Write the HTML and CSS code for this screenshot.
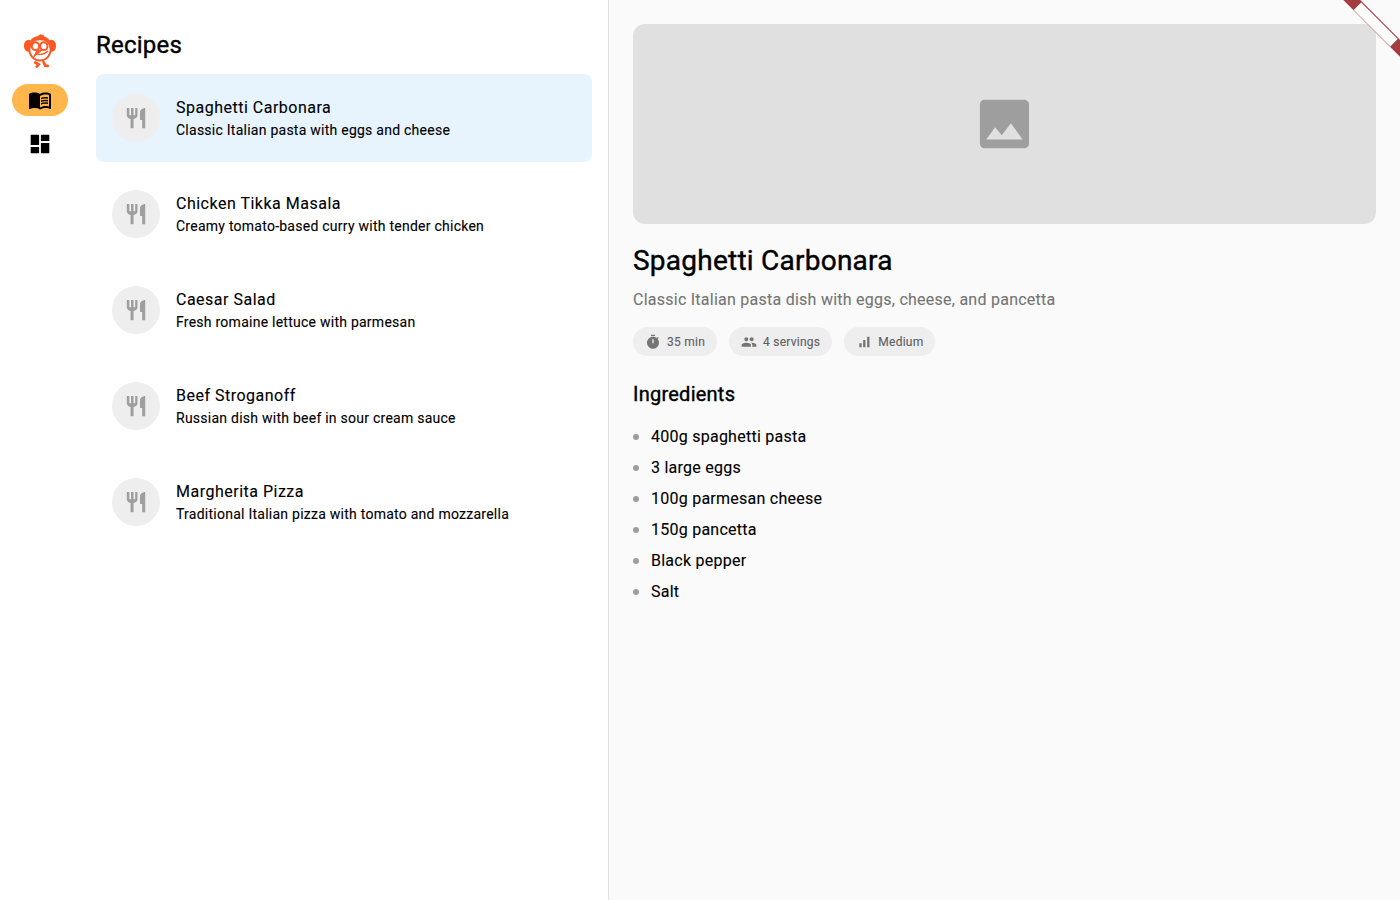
FILE: index.html
```html
<!DOCTYPE html>
<html lang="en">
<head>
<meta charset="utf-8">
<title>Recipes</title>
<link rel="stylesheet" href="styles.css">
</head>
<body>
<svg class="defs" width="0" height="0">
  <symbol id="fork" viewBox="0 0 24 24"><path d="M11.200 9.200H9.500V2H7v7.200H5.300V2H2.800v7c0 2.120 1.660 3.840 3.750 3.970V22.300h3v-9.330C11.840 12.840 13.500 11.120 13.500 9V2h-2.300v7.200zM16 6v8h2.200v8.300h3V2c-2.960 0-5.200 2.240-5.200 4z"/></symbol>
</svg>
<div class="app">
  <nav class="rail">
    <svg class="logo" width="34" height="36" viewBox="0 0 34 36" fill="none" stroke="#ff5722" stroke-linecap="round">
      <path d="M6 10C8 5.500 11 3.700 14.500 3.200C16.500 1.100 19 1 21 2.200L20.500 3.300C24.500 4.300 26.700 6.500 28 10C22 6.200 12 6.200 6 10Z" fill="#ff5722" stroke="none"/>
      <path d="M7.500 7.500C3.500 6 1 9 1 13C1 17 3.500 19.500 6.800 18.500L8 12ZM26.500 7.500C30.500 6 33 9 33 13C33 17 30.500 19.500 27.200 18.500L26 12Z" fill="#ff5722" stroke="none"/>
      <ellipse cx="17" cy="16.500" rx="10.700" ry="11" stroke-width="1.800"/>
      <ellipse cx="12.500" cy="13.200" rx="3.700" ry="3.900" stroke-width="2"/>
      <ellipse cx="20.800" cy="13.200" rx="3.700" ry="3.900" stroke-width="2"/>
      <path d="M18.800 17.300L10.500 24L14 17.500Z" fill="#ff5722" stroke-width="1"/>
      <path d="M15 21.500Q21 21.500 24.500 18.500" stroke-width="1.600"/>
      <path d="M12.200 29.500L15.700 31.300L13.700 33.600M20.500 29L22.300 32.700L24.700 32.900" stroke-width="2.700"/>
    </svg>
    <div class="nav active"><svg width="24" height="24" viewBox="0 0 24 24"><path d="M21 5c-1.110-.35-2.330-.5-3.500-.5-1.950 0-4.050.4-5.500 1.500-1.450-1.100-3.550-1.500-5.500-1.500S2.450 4.900 1 6v14.650c0 .25.25.5.5.5.1 0 .15-.05.25-.05C3.100 20.450 5.050 20 6.500 20c1.950 0 4.050.4 5.500 1.500 1.350-.85 3.800-1.500 5.500-1.500 1.650 0 3.350.3 4.750 1.050.1.050.15.050.25.050.25 0 .5-.25.5-.5V6c-.6-.45-1.250-.75-2-1zm0 13.500c-1.100-.35-2.300-.5-3.500-.5-1.700 0-4.150.65-5.500 1.500V8c1.350-.85 3.800-1.500 5.500-1.500 1.200 0 2.400.15 3.500.5v11.500z"/><path d="M17.500 10.500c.88 0 1.730.09 2.500.26V9.240c-.79-.15-1.640-.24-2.500-.24-1.700 0-3.240.29-4.500.83v1.660c1.130-.64 2.700-.99 4.500-.99zM13 12.490v1.660c1.130-.64 2.700-.99 4.500-.99.88 0 1.730.09 2.500.26V11.900c-.79-.15-1.640-.24-2.500-.24-1.700 0-3.240.3-4.500.83zM17.500 14.330c-1.700 0-3.240.29-4.500.83v1.660c1.130-.64 2.700-.99 4.500-.99.88 0 1.730.09 2.500.26v-1.520c-.79-.16-1.640-.24-2.500-.24z"/></svg></div>
    <div class="nav"><svg width="24" height="24" viewBox="0 0 24 24"><path d="M2.700 13.100h8.400V2.700H2.700v10.400zm0 8.200h8.400v-6.400H2.700v6.400zm10.200 0h8.400V10.900h-8.400v10.400zm0-18.600v6.400h8.400V2.700h-8.400z"/></svg></div>
  </nav>
  <main class="list">
    <h1 class="heading">Recipes</h1>
    <article class="recipe selected"><div class="avatar"><svg width="24" height="24"><use href="#fork"/></svg></div><div><div class="name">Spaghetti Carbonara</div><div class="sub">Classic Italian pasta with eggs and cheese</div></div></article>
    <article class="recipe"><div class="avatar"><svg width="24" height="24"><use href="#fork"/></svg></div><div><div class="name">Chicken Tikka Masala</div><div class="sub">Creamy tomato-based curry with tender chicken</div></div></article>
    <article class="recipe"><div class="avatar"><svg width="24" height="24"><use href="#fork"/></svg></div><div><div class="name">Caesar Salad</div><div class="sub">Fresh romaine lettuce with parmesan</div></div></article>
    <article class="recipe"><div class="avatar"><svg width="24" height="24"><use href="#fork"/></svg></div><div><div class="name">Beef Stroganoff</div><div class="sub">Russian dish with beef in sour cream sauce</div></div></article>
    <article class="recipe"><div class="avatar"><svg width="24" height="24"><use href="#fork"/></svg></div><div><div class="name">Margherita Pizza</div><div class="sub">Traditional Italian pizza with tomato and mozzarella</div></div></article>
  </main>
  <section class="detail">
    <div class="photo"><svg width="64" height="64" viewBox="0 0 24 24"><path d="M21 19.100V4.700c0-1-.8-1.800-1.800-1.800H4.400c-1 0-1.800.8-1.800 1.800v14.600c0 1 .8 1.800 1.800 1.800h14.800c1 0 1.800-.8 1.800-1.800zM8.300 13.200l2.500 3.010L14.200 11.700l4.400 6.100H5z"/></svg></div>
    <h2 class="title">Spaghetti Carbonara</h2>
    <p class="desc">Classic Italian pasta dish with eggs, cheese, and pancetta</p>
    <div class="chips">
      <div class="chip"><svg width="16" height="16" viewBox="0 0 24 24"><path d="M15 1H9v2h6V1zm4.030 6.390l1.420-1.420c-.43-.51-.9-.99-1.410-1.410l-1.420 1.420C16.070 4.740 14.120 4 12 4c-4.970 0-9 4.030-9 9s4.020 9 9 9 9-4.030 9-9c0-2.120-.74-4.070-1.970-5.610zM13 14h-2V8h2v6z"/></svg>35 min</div>
      <div class="chip"><svg width="16" height="16" viewBox="0 0 24 24"><path d="M16 11c1.660 0 2.990-1.340 2.990-3S17.660 5 16 5s-3 1.340-3 3 1.340 3 3 3zm-8 0c1.660 0 2.990-1.340 2.990-3S9.660 5 8 5 5 6.340 5 8s1.340 3 3 3zm0 2c-2.330 0-7 1.170-7 3.500V19h14v-2.500c0-2.330-4.670-3.500-7-3.500zm8 0c-.29 0-.62.020-.97.050 1.160.84 1.970 1.970 1.970 3.450V19h6v-2.500c0-2.330-4.670-3.500-7-3.500z"/></svg>4 servings</div>
      <div class="chip"><svg width="16" height="16" viewBox="0 0 24 24"><path d="M5 14h3.500v6H5zM10.700 9h3.500v11h-3.500zM16.700 4h3.500v16h-3.500z"/></svg>Medium</div>
    </div>
    <h3 class="subhead">Ingredients</h3>
    <ul class="ingredients">
      <li>400g spaghetti pasta</li><li>3 large eggs</li><li>100g parmesan cheese</li><li>150g pancetta</li><li>Black pepper</li><li>Salt</li>
    </ul>
  </section>
</div>
<svg class="ribbon" width="60" height="60" viewBox="0 0 60 60">
  <path d="M3.300 0H20.300L60 39.700V56.700Z" fill="#a23e40"/>
  <path d="M21.200 2.500L57.700 39L50.200 46.500L13.700 10Z" fill="#fff"/>
  <path d="M13.700 10.200L50.200 46.700" stroke="#d9b5b5" stroke-width=".8"/>
</svg>
</body>
</html>
```
FILE: styles.css
```css
* { box-sizing: border-box; margin: 0; padding: 0; }
body { font-family: Roboto, "Liberation Sans", sans-serif; color: #000; background: #fff; overflow: hidden; -webkit-text-stroke: .12px; }
svg { display: block; flex: none; }
.defs { position: absolute; }
.app { display: flex; height: 100vh; }
.rail { width: 80px; flex: none; display: flex; flex-direction: column; align-items: center; padding-top: 33px; }
.logo { margin-bottom: 15px; }
.nav { width: 56px; height: 32px; border-radius: 16px; display: flex; align-items: center; justify-content: center; margin-bottom: 12px; }
.nav.active { background: #ffb74d; }
.list { width: 528px; flex: none; padding: 29px 16px 0; }
.heading, .title, .subhead { font-weight: 400; letter-spacing: .24px; -webkit-text-stroke: .4px; }
.heading { font-size: 24px; line-height: 32px; margin-bottom: 13px; }
.recipe { height: 88px; padding: 0 16px; border-radius: 8px; display: flex; align-items: center; gap: 16px; margin-bottom: 8px; }
.selected { background: #e7f4fe; }
.avatar { width: 48px; height: 48px; border-radius: 50%; background: #eee; display: flex; align-items: center; justify-content: center; fill: #9e9e9e; }
.name { font-size: 16px; line-height: 24px; letter-spacing: .5px; }
.sub { font-size: 14px; line-height: 20px; letter-spacing: .25px; }
.detail { flex: 1; background: #fafafa; border-left: 1px solid #e0e0e0; padding: 24px; }
.photo { height: 200px; border-radius: 12px; background: #e0e0e0; display: flex; align-items: center; justify-content: center; fill: #9e9e9e; }
.title { font-size: 28px; line-height: 36px; margin-top: 19px; }
.desc { font-size: 16px; line-height: 24px; letter-spacing: .25px; color: #757575; margin-top: 9px; }
.chips { display: flex; gap: 12px; margin-top: 15px; }
.chip { height: 29px; border-radius: 15px; background: #eee; display: flex; align-items: center; gap: 6px; padding: 0 12px; font-size: 12px; letter-spacing: .25px; color: #616161; fill: #757575; }
.subhead { font-size: 20px; line-height: 28px; margin-top: 24px; }
.ingredients { list-style: none; margin-top: 16px; }
.ingredients li { display: flex; align-items: center; gap: 12px; height: 24px; margin-bottom: 7px; font-size: 16px; letter-spacing: .25px; }
.ingredients li::before { content: ""; width: 6px; height: 6px; margin-top: 1px; border-radius: 50%; background: #9e9e9e; }
.ribbon { position: absolute; top: 0; right: 0; }
```
